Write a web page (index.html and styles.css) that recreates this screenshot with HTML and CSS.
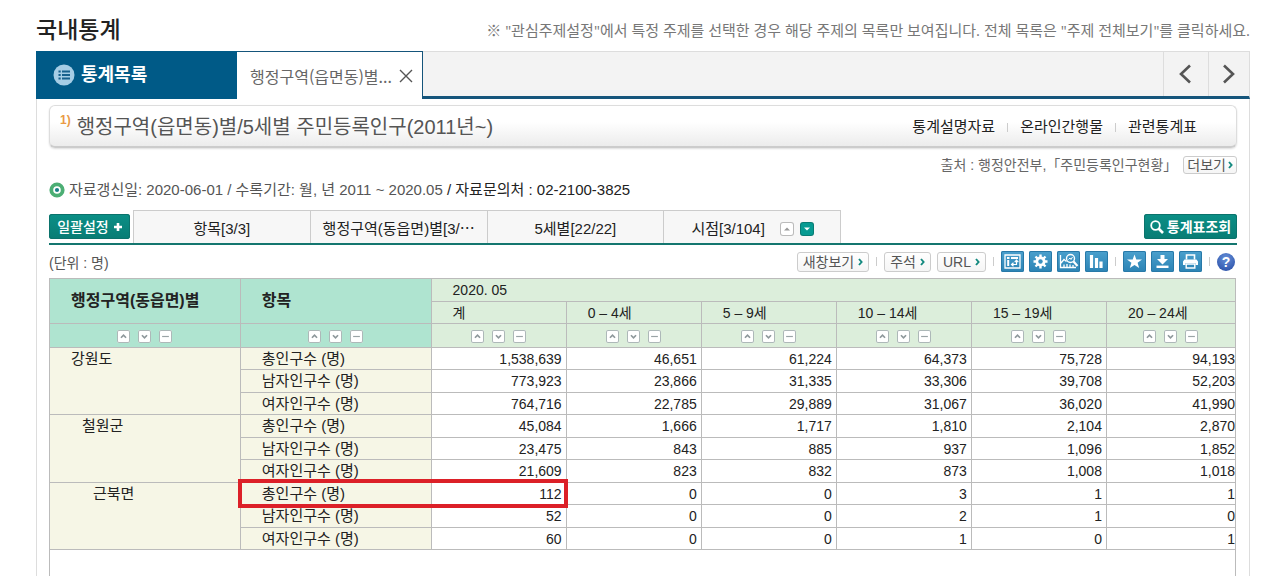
FILE: index.html
```html
<!DOCTYPE html>
<html lang="ko">
<head>
<meta charset="utf-8">
<title>국내통계</title>
<link rel="stylesheet" href="styles.css">
</head>
<body>
<svg class="defs" aria-hidden="true">
  <symbol id="up" viewBox="0 0 13 13"><path d="M3.500 8 6.500 5l3 3" fill="none" stroke="#8e989b" stroke-width="2"/></symbol>
  <symbol id="down" viewBox="0 0 13 13"><path d="m3.500 5 3 3 3-3" fill="none" stroke="#8e989b" stroke-width="2"/></symbol>
  <symbol id="minus" viewBox="0 0 13 13"><path d="M2.500 6.500h8" stroke="#9aa4a6" stroke-width="1.400"/></symbol>
  <symbol id="more" viewBox="0 0 5 8"><path d="M1 1 3.600 4 1 7" fill="none" stroke="#12897f" stroke-width="1.900"/></symbol>
</svg>
<header class="page-head">
  <h1>국내통계</h1>
  <p>※ "관심주제설정"에서 특정 주제를 선택한 경우 해당 주제의 목록만 보여집니다. 전체 목록은 "주제 전체보기"를 클릭하세요.</p>
</header>
<nav class="tabbar">
  <button class="tab-list"><svg width="22" height="22" viewBox="0 0 22 22"><circle cx="11" cy="11" r="10.500" fill="#a5cde5"/><path d="M9 7.500h8M9 11h8M9 14.500h8" stroke="#17608c" stroke-width="2"/><path d="M5.500 7.500h2.200M5.500 11h2.200M5.500 14.500h2.200" stroke="#17608c" stroke-width="2"/></svg>통계목록</button>
  <div class="tab-doc"><span>행정구역(읍면동)별...</span><button class="close" aria-label="닫기"><svg width="14" height="14" viewBox="0 0 14 14"><path d="M1 1 13 13M13 1 1 13" stroke="#555" stroke-width="1.400"/></svg></button></div>
  <button class="arrow arrow-prev" aria-label="이전"><svg width="14" height="20" viewBox="0 0 14 20"><path d="M12 1.500 3 10l9 8.500" fill="none" stroke="#555" stroke-width="2.600"/></svg></button>
  <button class="arrow" aria-label="다음"><svg width="14" height="20" viewBox="0 0 14 20"><path d="M2 1.500 11 10l-9 8.500" fill="none" stroke="#555" stroke-width="2.600"/></svg></button>
</nav>
<main class="content">
  <section class="title-box">
    <h2><sup>1)</sup>행정구역(읍면동)별/5세별 주민등록인구(2011년~)</h2>
    <div class="links"><a href="#">통계설명자료</a><i></i><a href="#">온라인간행물</a><i></i><a href="#">관련통계표</a></div>
  </section>
  <div class="source"><span>출처 : 행정안전부,「주민등록인구현황」</span><button class="btn">더보기<svg width="5" height="8"><use href="#more"/></svg></button></div>
  <p class="meta"><svg width="16" height="16" viewBox="0 0 16 16"><circle cx="8" cy="8" r="5.700" fill="#fff" stroke="#4cae74" stroke-width="3.800"/><circle cx="8" cy="8" r="2.100" fill="#197f86"/></svg><span>자료갱신일: 2020-06-01 / 수록기간: 월, 년 2011 ~ 2020.05 <b>/ 자료문의처 : 02-2100-3825</b></span></p>
  <div class="settings">
    <button class="teal">일괄설정<svg width="8" height="8" viewBox="0 0 8 8"><path d="M4 0v8M0 4h8" stroke="#fff" stroke-width="2.600"/></svg></button>
    <div class="filters">
      <button>항목[3/3]</button>
      <button>행정구역(동읍면)별[3/⋯</button>
      <button>5세별[22/22]</button>
      <div class="period"><span>시점[3/104]</span>
        <button class="order" aria-label="오름차순"><svg width="12" height="12" viewBox="0 0 12 12"><path d="M3 7.500h6L6 4.500z" fill="#999"/></svg></button>
        <button class="order order-on" aria-label="내림차순"><svg width="12" height="12" viewBox="0 0 12 12"><path d="M3 4.500h6L6 7.500z" fill="#fff"/></svg></button></div>
    </div>
    <button class="teal search"><svg width="14" height="14" viewBox="0 0 14 14"><circle cx="5.500" cy="5.500" r="4.300" fill="none" stroke="#fff" stroke-width="1.800"/><path d="m8.500 8.500 4.500 4.500" stroke="#fff" stroke-width="2.600"/></svg>통계표조회</button>
  </div>
  <div class="toolbar">
    <span class="unit">(단위 : 명)</span>
    <button class="btn">새창보기<svg width="5" height="8"><use href="#more"/></svg></button><i></i>
    <button class="btn">주석<svg width="5" height="8"><use href="#more"/></svg></button>
    <button class="btn">URL<svg width="5" height="8"><use href="#more"/></svg></button><i></i>
    <div class="icons">
      <button aria-label="행렬전환"><svg viewBox="0 0 23 21"><path d="M4 4h15v13H4z" fill="none" stroke="#fff" stroke-width="1.300"/><path d="M6 7h2.500M10 7h7M7.200 9v6" stroke="#fff" stroke-width="2"/><path d="M15.500 9.500v4H11M13.700 11.200l1.800-2 1.800 2M12.500 11.700l-2 1.800 2 1.800" fill="none" stroke="#fff" stroke-width="1.200"/></svg></button>
      <button aria-label="설정"><svg viewBox="0 0 23 21"><circle cx="11.500" cy="10.500" r="5" fill="#fff"/><path d="M11.500 3.500v14M4.500 10.500h14M6.500 5.500l10 10M16.500 5.500l-10 10" stroke="#fff" stroke-width="2.400"/><circle cx="11.500" cy="10.500" r="2.200" fill="#3b8fbe"/></svg></button>
      <button aria-label="분석"><svg viewBox="0 0 23 21"><path d="M3.500 4v12.500H19M4 12l3-3.500 2.500 2M7 16v-2.500M10 16v-3M13 16v-2.500M16 16v-2" fill="none" stroke="#fff" stroke-width="1.300"/><circle cx="13.500" cy="7.500" r="4" fill="none" stroke="#fff" stroke-width="1.400"/><path d="m16.500 10.500 4 4.500" stroke="#fff" stroke-width="2.200"/><path d="m11.500 8.500 1.500-1.500 1 1.500 1.500-2.500" fill="none" stroke="#fff"/></svg></button>
      <button aria-label="차트"><svg viewBox="0 0 23 21"><path d="M6.500 4v13M11.500 7v10M16 10.500V17" stroke="#fff" stroke-width="3.200"/></svg></button>
    </div><i></i>
    <div class="icons">
      <button aria-label="즐겨찾기"><svg viewBox="0 0 23 21"><path d="m11.500 3.500 1.800 4.900 5.700.1-4.400 3.300 1.600 5.200-4.700-3.100L6.800 17l1.600-5.200L4 8.500l5.700-.1z" fill="#fff"/></svg></button>
      <button aria-label="내려받기"><svg viewBox="0 0 23 21"><path d="M9.500 4h4v4h3.500l-5.500 5.500L6 8h3.500z" fill="#fff"/><path d="M5.500 15.800h12" stroke="#fff" stroke-width="2.400"/></svg></button>
      <button aria-label="인쇄"><svg viewBox="0 0 23 21"><path d="M7.500 8.500V4h8v4.500" fill="none" stroke="#fff" stroke-width="1.600"/><path d="M5.500 8.500h12l1.500 2V14h-2.500v-2h-10v2H4v-3.500z" fill="#fff"/><path d="M7.200 13h8.600v4H7.200z" fill="none" stroke="#fff" stroke-width="1.400"/></svg></button>
    </div><i></i>
    <button class="help" aria-label="도움말">?</button>
  </div>
  <div class="grid">
    <table>
      <colgroup><col class="c-label"><col class="c-label"><col class="c-num"><col class="c-num"><col class="c-num"><col class="c-num"><col class="c-num"><col></colgroup>
      <thead>
        <tr class="h1"><th rowspan="2" class="key">행정구역(동읍면)별</th><th rowspan="2" class="key">항목</th><th colspan="6">2020. 05</th></tr>
        <tr class="h2"><th>계</th><th>0 – 4세</th><th>5 – 9세</th><th>10 – 14세</th><th>15 – 19세</th><th>20 – 24세</th></tr>
        <tr class="sort" id="sort"></tr>
      </thead>
      <tbody>
        <tr><th rowspan="3">강원도</th><th>총인구수 (명)</th><td>1,538,639</td><td>46,651</td><td>61,224</td><td>64,373</td><td>75,728</td><td>94,193</td></tr>
        <tr><th>남자인구수 (명)</th><td>773,923</td><td>23,866</td><td>31,335</td><td>33,306</td><td>39,708</td><td>52,203</td></tr>
        <tr><th>여자인구수 (명)</th><td>764,716</td><td>22,785</td><td>29,889</td><td>31,067</td><td>36,020</td><td>41,990</td></tr>
        <tr><th rowspan="3" class="lv2">철원군</th><th>총인구수 (명)</th><td>45,084</td><td>1,666</td><td>1,717</td><td>1,810</td><td>2,104</td><td>2,870</td></tr>
        <tr><th>남자인구수 (명)</th><td>23,475</td><td>843</td><td>885</td><td>937</td><td>1,096</td><td>1,852</td></tr>
        <tr><th>여자인구수 (명)</th><td>21,609</td><td>823</td><td>832</td><td>873</td><td>1,008</td><td>1,018</td></tr>
        <tr><th rowspan="3" class="lv3">근북면</th><th class="marked">총인구수 (명)<span class="mark"></span></th><td>112</td><td>0</td><td>0</td><td>3</td><td>1</td><td>1</td></tr>
        <tr><th>남자인구수 (명)</th><td>52</td><td>0</td><td>0</td><td>2</td><td>1</td><td>0</td></tr>
        <tr><th>여자인구수 (명)</th><td>60</td><td>0</td><td>0</td><td>1</td><td>0</td><td>1</td></tr>
      </tbody>
    </table>
  </div>
</main>
<script src="sort.js"></script>
</body>
</html>
```

FILE: sort.js
```js
const row = document.getElementById('sort');
const kinds = [['up', '오름차순'], ['down', '내림차순'], ['minus', '정렬 해제']];
for (let i = 0; i < 8; i++) {
  const cell = document.createElement('th');
  if (i < 2) cell.className = 'key';
  cell.innerHTML = '<div>' + kinds.map(([id, label]) =>
    `<button aria-label="${label}"><svg width="11" height="11"><use href="#${id}"/></svg></button>`).join('') + '</div>';
  row.append(cell);
}
```

FILE: styles.css
```css
* { box-sizing: border-box; }
body {
  margin: 0;
  padding: 10px 30px 0 36px;
  min-height: 100vh;
  display: flex;
  flex-direction: column;
  background: #fff;
  color: #333;
  font: 14px/20px "Liberation Sans", "Noto Sans CJK KR", sans-serif;
}
h1, h2, p { margin: 0; font-weight: 400; }
button { padding: 0; border: 0; background: none; color: inherit; font: inherit; }
svg { flex: none; display: block; }
.defs { position: absolute; width: 0; height: 0; }

.page-head { display: flex; justify-content: space-between; height: 41px; white-space: nowrap; }
.page-head h1 { font-size: 23px; line-height: 41px; font-weight: 500; color: #222; }
.page-head p { font-family: "Open Sans", "Noto Sans CJK KR", sans-serif; font-size: 15px; line-height: 40px; color: #777; }

.tabbar { display: flex; height: 48px; background: #f3f3f3; border-top: 1px solid #ddd; border-right: 1px solid #ddd; border-bottom: 3px solid #15557b; }
.tab-list { display: flex; align-items: center; gap: 6px; width: 201px; margin: -1px 0 -3px; padding-left: 17px; background: #005a87; color: #fff; font-size: 18px; font-weight: 700; }
.tab-doc { display: flex; align-items: center; justify-content: space-between; width: 186px; margin: -1px auto -3px 0; padding: 0 9px 0 13px; background: #fff; border-top: 1px solid #15557b; border-right: 1px solid #15557b; color: #666; font: 16px/24px "Noto Sans CJK KR", sans-serif; }
.arrow { display: flex; align-items: center; justify-content: center; width: 41px; border-left: 1px solid #ddd; }
.arrow-prev { width: 45px; padding-right: 3px; }

.content { flex: 1; display: flex; flex-direction: column; padding: 6px 12px 0; border: solid #ddd; border-width: 0 1px; }
.title-box { display: flex; align-items: center; justify-content: space-between; height: 43px; padding: 2px 39px 0 10px; border: 1px solid #ddd; border-bottom: 2px solid #ccc; border-radius: 6px; background: linear-gradient(#fff 40%, #ececec); box-shadow: 0 1px 2px #ddd; }
.title-box h2 { display: flex; font-size: 20px; line-height: 30px; color: #555; }
.title-box sup { margin-right: 6px; font-size: 12px; line-height: 16px; font-weight: 700; color: #e99a45; }
.links { display: flex; align-items: center; gap: 12px; color: #222; font-size: 15px; }
.links a { color: inherit; text-decoration: none; }
i { width: 1px; height: 9px; background: #ccc; }
.source { display: flex; align-items: center; justify-content: flex-end; gap: 6px; margin-top: 7px; color: #666; }
.btn { display: flex; align-items: center; gap: 4px; height: 20px; padding: 0 5px; border: 1px solid #ccc; border-radius: 3px; background: linear-gradient(#fff, #f5f5f5); color: #555; font-size: 14px; line-height: 18px; }
.source .btn { height: 18px; gap: 2px; padding: 0 3px; line-height: 16px; }
.meta { display: flex; align-items: center; gap: 4px; margin-top: 5px; color: #555; font-size: 15px; }
.meta b { font-weight: 400; color: #222; }

.settings { display: flex; margin-top: 10px; height: 35px; border-bottom: 2px solid #14766f; }
.teal { display: flex; align-items: center; justify-content: center; gap: 5px; width: 81px; height: 25px; margin-top: 4px; border-radius: 3px; background: linear-gradient(#0b8f86, #087c74); box-shadow: inset 0 0 0 1px #0b736c; color: #fff; font-size: 14px; font-weight: 500; }
.search { width: 93px; font-weight: 700; gap: 3px; }
.filters { display: flex; width: 708px; margin: 0 auto 0 3px; background: #f7f7f7; border: solid #ccc; border-width: 1px 1px 0 0; }
.filters > * { flex: 1; border-left: 1px solid #ccc; color: #222; padding-top: 3px; font-size: 15px; white-space: nowrap; }
.period { display: flex; align-items: center; justify-content: center; }
.filters .order { width: 12px; height: 12px; margin-left: 16px; border-radius: 2px; box-shadow: 0 0 0 1px #bbb; background: #fff; }
.filters .order-on { margin-left: 8px; background: #079b92; box-shadow: 0 0 0 1px #087c74; }

.toolbar { display: flex; align-items: center; height: 33px; gap: 7px; padding-right: 2px; }
.toolbar .btn + .btn { margin-left: -1px; }
.unit { margin-right: auto; color: #555; padding-top: 3px; }
.icons { display: flex; gap: 5px; }
.icons button { width: 23px; height: 21px; border-radius: 2px; background: linear-gradient(#4ba0cd, #2b83b4); box-shadow: inset 0 0 0 1px #2879a8; }
.help { width: 18px; height: 18px; border-radius: 50%; background: radial-gradient(circle at 50% 30%, #6690d8, #2449a3); color: #fff; font-weight: 700; line-height: 18px; }

.grid { flex: 1; border: solid #bbb; border-width: 0 1px; margin-right: 1px; }
table { width: 100%; table-layout: fixed; border-spacing: 0; border-top: 1px solid #bbb; }
.c-label { width: 16.1%; }
.c-num { width: 11.4%; }
th, td { padding: 0; border: solid #bbb; border-width: 0 1px 1px 0; overflow: hidden; white-space: nowrap; color: #222; line-height: 20px; }
tr > :last-child { border-right: 0; }
tbody th:last-of-type { border-right: 1px solid #bbb; }
th { padding-left: 21px; text-align: left; font-weight: 400; background: #dceedb; }
.h1, .h2 { height: 22px; }
.h1 { height: 23px; }
thead .key { background: #afe4d0; font-size: 16px; font-weight: 700; }
.sort { height: 24px; }
.sort th { padding: 2px 0 0; }
.sort div { display: flex; justify-content: center; gap: 8px; }
.sort button { width: 13px; height: 13px; padding: 1px; border-radius: 2px; background: #fff; box-shadow: inset 0 0 0 1px #adb8b8; }
tbody tr { height: 22px; }
tbody tr:nth-child(even) { height: 23px; }
tbody th { padding-top: 1px; background: #f6f6e6; font-size: 15px; vertical-align: top; }
td { padding-right: 4px; text-align: right; }
td:last-child { padding-right: 0; }
tbody .lv2 { padding-left: 32px; }
tbody .lv3 { padding-left: 43px; }
tbody .marked { position: relative; overflow: visible; }
.mark { position: absolute; z-index: 1; top: -4px; left: -3px; width: 174%; height: 29px; border: 4px solid #dc2028; }
```
